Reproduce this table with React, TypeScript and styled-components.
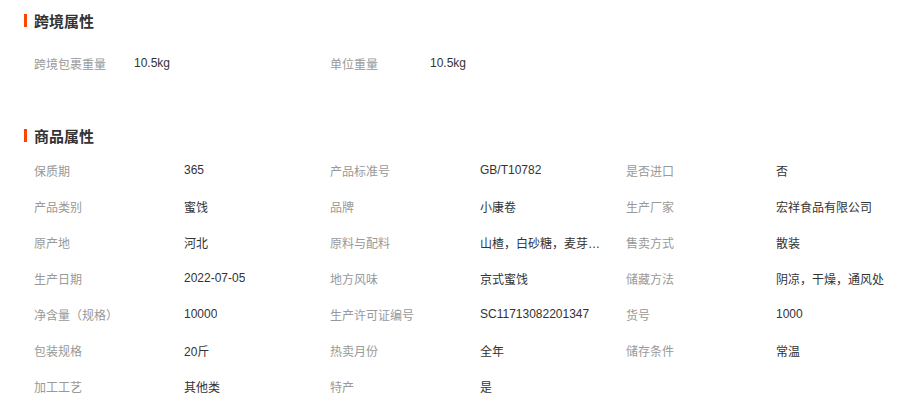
import React from 'react';
import styled, {createGlobalStyle} from 'styled-components';

const GlobalStyle = createGlobalStyle`
  body {
    margin: 0;
    background: #fff;
    font-family: "Liberation Sans", "Noto Sans CJK SC", sans-serif;
    font-size: 12px;
    color: #333;
  }
`

const Page = styled.div`
  width: 912px;
  padding: 10px 0 0 24px;
  box-sizing: border-box;
`

const Section = styled.section<{ $gap: number }>`
  margin-top: ${({$gap}) => $gap}px;
`

const Title = styled.h3<{ $space: number }>`
  margin: 0 0 ${({$space}) => $space}px 0;
  display: flex;
  align-items: center;
  gap: 7px;
  height: 20px;
  font-size: 15px;
  font-weight: bold;
  color: #333;
  &::before {
    content: '';
    width: 3px;
    height: 13px;
    background: #ff4400;
  }
`

const Grid = styled.div`
  display: grid;
  grid-template-columns: repeat(3, 296px);
  padding-left: 10px;
`

const Cell = styled.div`
  display: flex;
  align-items: center;
  height: 36px;
  white-space: nowrap;
`

const Label = styled.span<{ $width: number }>`
  width: ${({$width}) => $width}px;
  flex-shrink: 0;
  color: #999;
`

const Value = styled.span`
  max-width: 130px;
  overflow: hidden;
  text-overflow: ellipsis;
  color: #333;
`

type Attr = [string, string];

const crossBorder: Attr[] = [
    ['跨境包裹重量', '10.5kg'],
    ['单位重量', '10.5kg'],
];

const goods: Attr[] = [
    ['保质期', '365'],
    ['产品标准号', 'GB/T10782'],
    ['是否进口', '否'],
    ['产品类别', '蜜饯'],
    ['品牌', '小康卷'],
    ['生产厂家', '宏祥食品有限公司'],
    ['原产地', '河北'],
    ['原料与配料', '山楂，白砂糖，麦芽…'],
    ['售卖方式', '散装'],
    ['生产日期', '2022-07-05'],
    ['地方风味', '京式蜜饯'],
    ['储藏方法', '阴凉，干燥，通风处'],
    ['净含量（规格）', '10000'],
    ['生产许可证编号', 'SC11713082201347'],
    ['货号', '1000'],
    ['包装规格', '20斤'],
    ['热卖月份', '全年'],
    ['储存条件', '常温'],
    ['加工工艺', '其他类'],
    ['特产', '是'],
];

function AttrGrid(params: { items: Attr[], labelWidth: number }) {
    return (
        <Grid>
            {params.items.map(([label, value], i) => (
                <Cell key={i}>
                    <Label $width={params.labelWidth}>{label}</Label>
                    <Value>{value}</Value>
                </Cell>
            ))}
        </Grid>
    )
}

function App() {
    return (
        <>
            <GlobalStyle/>
            <Page>
                <Section $gap={0}>
                    <Title $space={15}>跨境属性</Title>
                    <AttrGrid items={crossBorder} labelWidth={100}/>
                </Section>
                <Section $gap={44}>
                    <Title $space={7}>商品属性</Title>
                    <AttrGrid items={goods} labelWidth={150}/>
                </Section>
            </Page>
        </>
    );
}

export default App;
